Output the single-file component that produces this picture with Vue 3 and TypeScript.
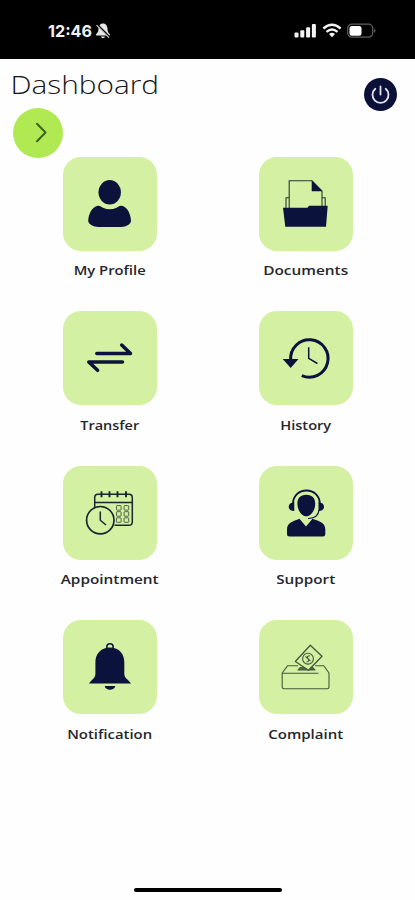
<script setup lang="ts">
interface Tile {
  icon: string
  label: string
  width: number
}

const tiles: Tile[] = [
  { icon: 'profile', label: 'My Profile', width: 72 },
  { icon: 'documents', label: 'Documents', width: 85 },
  { icon: 'transfer', label: 'Transfer', width: 59 },
  { icon: 'history', label: 'History', width: 51 },
  { icon: 'appointment', label: 'Appointment', width: 98 },
  { icon: 'support', label: 'Support', width: 59 },
  { icon: 'notification', label: 'Notification', width: 85 },
  { icon: 'complaint', label: 'Complaint', width: 75 },
]

const calendarRows: number[] = [41.8, 47.9, 54]
const calendarCols: number[] = [55.7, 63.3]
</script>

<template>
  <div class="screen">
    <div class="status">
      <div class="time">
        <svg class="clock" width="47" height="24" viewBox="0 0 47 24">
          <text x="1" y="18" textLength="44" lengthAdjust="spacingAndGlyphs">12:46</text>
        </svg>
        <svg class="muted" width="16" height="18" viewBox="0 0 16 18">
          <path d="M8 1.5C5 1.5 3.500 4 3.500 7c0 3-1.200 4-2.400 5.200V13.500H14.900V12.200C13.500 11 12.500 10 12.500 7c0-3-1.500-5.500-4.500-5.500zM6 14.500h4c-.3 2.200-3.700 2.200-4 0z" fill="#e6e6e6" />
          <path d="M2 2.500L14.500 15" stroke="#000" stroke-width="2" />
          <path d="M1.500 3.200L14 15.700" stroke="#ddd" stroke-width="1.100" />
        </svg>
      </div>
      <div class="signals">
        <svg width="23" height="16" viewBox="0 0 23 16" fill="#f4f4f4">
          <rect x="0.500" y="9.500" width="4" height="5" rx="1" />
          <rect x="6.300" y="7.300" width="4" height="7.200" rx="1" />
          <rect x="12.100" y="4.200" width="4" height="10.300" rx="1" />
          <rect x="17.900" y="1" width="4" height="13.500" rx="1" />
        </svg>
        <svg width="20" height="16" viewBox="0 0 20 16" fill="none" stroke="#f4f4f4" stroke-width="2.400">
          <path d="M1.400 5.500Q10 -1.900 18.600 5.500" />
          <path d="M4.500 8.900Q10 4.200 15.500 8.900" />
          <path d="M7 10.900Q10 8.700 13 10.900L10 14.200z" fill="#f4f4f4" stroke="none" />
        </svg>
        <svg width="30" height="16" viewBox="0 0 30 16">
          <rect x="0.700" y="1.200" width="25" height="13" rx="4.200" fill="none" stroke="#606060" stroke-width="1.200" />
          <rect x="2.500" y="3" width="12" height="9.800" rx="2.500" fill="#fff" />
          <path d="M27.200 5.500q2.500 2.200 0 4.400z" fill="#707070" />
        </svg>
      </div>
    </div>

    <header class="header">
      <h1 class="title">
        <svg width="160" height="42" viewBox="0 0 160 42">
          <text x="0.500" y="30" textLength="148.500" lengthAdjust="spacingAndGlyphs">Dashboard</text>
        </svg>
      </h1>
      <button class="power" aria-label="Power">
        <svg width="33" height="33" viewBox="0 0 33 33" fill="none" stroke="#e3e4ec" stroke-width="1.800" stroke-linecap="round">
          <path d="M16.500 8.500V16.500M11.300 10.800A8 8 0 1 0 21.700 10.800" />
        </svg>
      </button>
    </header>

    <button class="next" aria-label="Open menu">
      <svg width="50" height="50" viewBox="0 0 50 50">
        <path d="M24 15.800L32.500 24.500L24 33.200" fill="none" stroke="#3d6426" stroke-width="2" stroke-linecap="round" stroke-linejoin="round" />
      </svg>
    </button>

    <main class="grid">
      <div v-for="tile in tiles" :key="tile.icon" class="item">
        <div class="tile">
          <svg width="94" height="94" viewBox="0 0 94 94">
            <g v-if="tile.icon === 'profile'" fill="#0b123c">
              <ellipse cx="46.700" cy="35.300" rx="11.200" ry="12.200" />
              <path d="M34.500 48.800C37 48.200 38 50 40.500 51C44.500 52.700 49 52.700 53 51C55.500 50 56.500 48.200 59 48.800C64.500 50.500 67.500 56.500 68 63.500C68.200 67 63.500 70 58 70H35.500C30 70 25 67 25.200 63.500C25.700 56.500 29 50.500 34.500 48.800Z" />
            </g>

            <g v-else-if="tile.icon === 'documents'" fill="none" stroke="#26382f" stroke-width="1.100">
              <path d="M30.200 51V23.700H53L63 34V50M30 40.700H27V51M63 40.700H66.200V51" />
              <path d="M52.700 23.300L63.300 34.300H52.700Z" fill="#0b123c" stroke="none" />
              <path d="M24 50.800H48.500L50 48.800H68.700L67 69.700H26.300Z" fill="#0b123c" stroke="none" />
            </g>

            <g v-else-if="tile.icon === 'transfer'" fill="none" stroke="#0b123c" stroke-width="3.500" stroke-linecap="round" stroke-linejoin="round">
              <path d="M33.800 42.600H67.500L58.700 34" />
              <path d="M59.500 50.900H25.800L34.600 59.300" />
            </g>

            <g v-else-if="tile.icon === 'history'" fill="none" stroke="#0b123c">
              <path d="M42.800 64.600A18.700 18.700 0 1 0 31.700 49" stroke-width="3" />
              <path d="M23.700 48H39.500L31.700 57Z" fill="#0b123c" stroke="none" />
              <path d="M49.700 36.200V47.300L58.400 52.500" stroke-width="1.500" />
            </g>

            <g v-else-if="tile.icon === 'appointment'" fill="none" stroke="#16272e" stroke-width="1.500">
              <path d="M31.700 42V31.500Q31.700 28.200 35 28.200H66Q69.300 28.200 69.300 31.500V56Q69.300 59.300 66 59.300H51.500M31.700 36.500H69.300" />
              <path d="M38.500 25.200V31.200M46.500 25.200V31.200M54.500 25.200V31.200M63 25.200V31.200" stroke-width="1.900" />
              <circle cx="37.300" cy="54.200" r="13.700" stroke-width="1.700" />
              <path d="M37.300 45.500V54.200L43 59" stroke-width="1.500" />
              <g stroke-width="0.900" stroke="#3e5638">
                <template v-for="y in calendarRows" :key="y">
                  <rect v-for="x in calendarCols" :key="x" :x="x - 2.200" :y="y - 2.200" width="4.600" height="4.500" rx="0.600" />
                </template>
              </g>
            </g>

            <g v-else-if="tile.icon === 'support'" fill="#0b123c">
              <path d="M47.300 28.700C53.500 28.700 56.300 32.500 56.200 38C56.100 45 51.500 50.300 47.300 50.300C43.100 50.300 38.500 45 38.400 38C38.300 32.500 41.100 28.700 47.300 28.700Z" />
              <path d="M34 38C34 20 60.800 20 60.800 38" fill="none" stroke="#0b123c" stroke-width="1.900" />
              <path d="M35.300 36.500V45C31.800 45 29.700 43.300 29.700 40.700S31.800 36.500 35.300 36.500ZM59.500 36.500V45C63 45 65 43.300 65 40.700S63 36.500 59.500 36.500Z" />
              <path d="M60 44C59.500 49 55.500 52.300 49.500 52.500" fill="none" stroke="#0b123c" stroke-width="1.200" stroke-linecap="round" />
              <path d="M40.500 52.800L47 60.500L53.500 52.800C60.500 55.500 66.300 56.800 66.300 63.500V68Q66.300 70.500 63.800 70.500H30.500Q28 70.500 28 68V63.500C28 56.800 34 55.500 40.500 52.800Z" />
            </g>

            <g v-else-if="tile.icon === 'notification'" fill="#0b123c">
              <circle cx="47" cy="27" r="3.200" fill="none" stroke="#0b123c" stroke-width="1.500" />
              <path d="M47 27.500C56.500 27.500 61.300 34.500 61.300 42V54C61.300 58.500 66.500 60.500 68 63.500H26C27.500 60.500 32.400 58.500 32.400 54V42C32.400 34.500 37.500 27.500 47 27.500Z" />
              <path d="M41.700 66H52.300C51.500 71 42.500 71 41.700 66Z" />
            </g>

            <g v-else fill="none" stroke="#41593a" stroke-width="1.100" stroke-linejoin="round">
              <path d="M39 45.700H28.700L23.200 53V67Q23.200 68.700 25 68.700H68.300Q70 68.700 70 67V53L64.800 45.700H56" />
              <path d="M23.200 53.200H59.500" />
              <path d="M41.500 47L39 50H56L53 47" fill="#536b43" />
              <path d="M51.300 25.300L63 36.300L49.500 50.300L36.300 41.500Z" fill="#d4f1a3" stroke-width="1.300" />
              <circle cx="49" cy="38.700" r="5.400" />
              <path d="M46.500 36.500L51.500 41M51 35.700Q47 36 49 38.700T47.500 42" />
            </g>
          </svg>
        </div>
        <svg class="label" width="110" height="24" viewBox="0 0 110 24">
          <text x="54.700" y="17" text-anchor="middle" :textLength="tile.width" lengthAdjust="spacingAndGlyphs">{{ tile.label }}</text>
        </svg>
      </div>
    </main>

    <div class="home-bar"></div>
  </div>
</template>

<style>
body {
  margin: 0;
  background: #fefefe;
}
</style>

<style scoped>
.screen {
  box-sizing: border-box;
  width: 415px;
  height: 900px;
  display: flex;
  flex-direction: column;
  background: #fefefe;
  overflow: hidden;
}

svg {
  display: block;
}

.status {
  box-sizing: border-box;
  height: 58.5px;
  flex: none;
  padding: 19px 38px 0 47px;
  display: flex;
  justify-content: space-between;
  background: #000;
}

.time {
  display: flex;
  gap: 1px;
}

.clock text {
  font: 700 16.5px Inter, sans-serif;
  fill: #f2f2f2;
}

.muted {
  margin-top: 3px;
}

.signals {
  display: flex;
  gap: 5px;
  padding-top: 4px;
}

.header {
  flex: none;
  height: 49px;
  display: flex;
  justify-content: space-between;
  padding: 0 18.5px 0 10px;
}

.title {
  margin: 5px 0 0;
}

.title text {
  font: 300 26.5px "Open Sans", sans-serif;
  fill: #161616;
}

button {
  border: 0;
  padding: 0;
  border-radius: 50%;
}

.power {
  width: 33px;
  height: 33px;
  margin-top: 19px;
  background: #0b1038;
}

.next {
  flex: none;
  width: 50px;
  height: 50px;
  margin-left: 12.7px;
  background: #b0e951;
}

.grid {
  flex: none;
  display: grid;
  grid-template-columns: 94px 94px;
  grid-auto-rows: 154.5px;
  column-gap: 102px;
  margin: -1px 0 0 63px;
}

.item {
  display: flex;
  flex-direction: column;
  align-items: center;
}

.tile {
  width: 94px;
  height: 94px;
  flex: none;
  border-radius: 18px;
  background: #d4f1a3;
}

.label {
  flex: none;
  margin: 7.5px -8px 0;
}

.label text {
  font: 600 13px "Open Sans", sans-serif;
  fill: #25252c;
}

.home-bar {
  width: 148px;
  height: 4px;
  margin: auto auto 8px 134px;
  flex: none;
  border-radius: 2px;
  background: #000;
}
</style>
